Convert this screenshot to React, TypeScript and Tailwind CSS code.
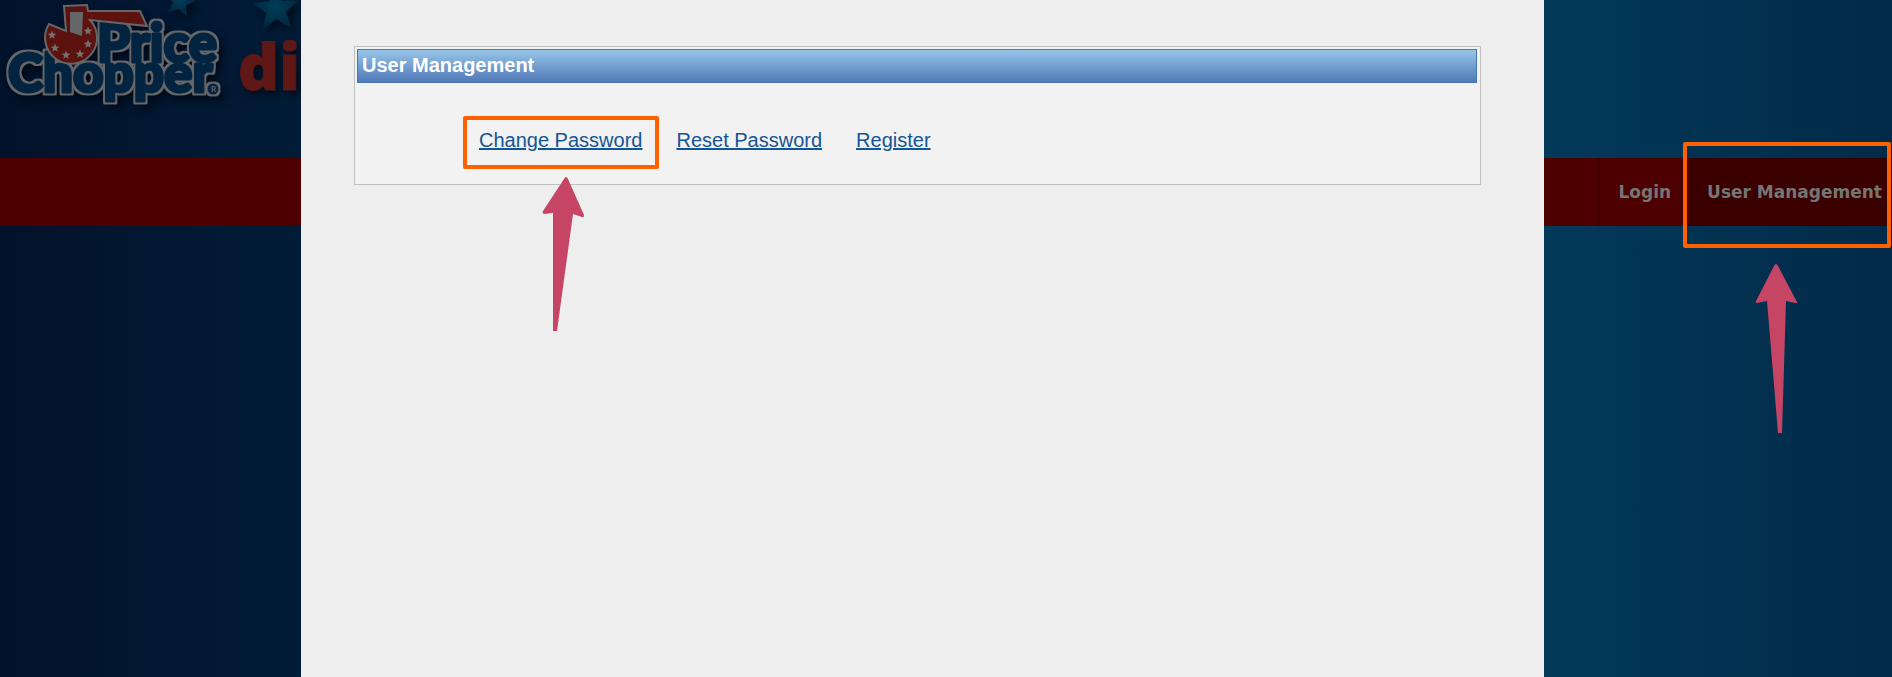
import React from 'react'

const LOGO_STARS: [number, number][] = [
  [52, 35],
  [55, 48],
  [66, 55],
  [80, 54],
  [88, 44],
  [88, 31],
]

const STAR = 'M0 -10 L2.6 -3.4 L9.6 -3 L4.2 1.4 L6 8.2 L0 4.4 L-6 8.2 L-4.2 1.4 L-9.6 -3 L-2.6 -3.4 Z'

const Logo: React.FC = () => {
  return (
    <svg
      className="block"
      width="301"
      height="120"
      viewBox="0 0 301 120"
      role="img"
      aria-label="Price Chopper"
    >
      <defs>
        <radialGradient id="star">
          <stop offset="0" stopColor="#023d58" />
          <stop offset="1" stopColor="#02263f" />
        </radialGradient>
        <filter
          id="shadow"
          x="-10%"
          y="-10%"
          width="130%"
          height="130%"
          colorInterpolationFilters="sRGB"
        >
          <feDropShadow dx="4" dy="5" stdDeviation="4" floodColor="#000814" floodOpacity="0.8" />
        </filter>
        <filter
          id="outline"
          x="-10%"
          y="-10%"
          width="120%"
          height="120%"
          colorInterpolationFilters="sRGB"
        >
          <feMorphology in="SourceAlpha" operator="dilate" radius="1.5" result="grown" />
          <feFlood floodColor="#656669" />
          <feComposite in2="grown" operator="in" result="edge" />
          <feMerge>
            <feMergeNode in="edge" />
            <feMergeNode in="SourceGraphic" />
          </feMerge>
        </filter>
      </defs>
      <g filter="url(#shadow)">
        <path d={STAR} fill="url(#star)" transform="translate(180 2) rotate(12) scale(1.6)" />
        <path d={STAR} fill="url(#star)" transform="translate(276 9) rotate(-3) scale(2.4)" />
      </g>
      <g filter="url(#shadow)">
        <g
          filter="url(#outline)"
          fill="#022440"
          stroke="#022440"
          strokeWidth="3"
          strokeLinejoin="round"
          fontFamily="Lato, sans-serif"
          fontWeight="900"
          fontSize="53"
        >
          <text x="97" y="62">Price</text>
          <text x="8" y="92">Chopper</text>
          <circle cx="213" cy="89" r="4" />
        </g>
        <text x="211" y="92" fontFamily="Lato, sans-serif" fontSize="8" fontWeight="700" fill="#656669">
          R
        </text>
        <path
          d="M64 6 L87 5 L88 11 L140 11 L147 26 L90 20 A26 26 0 1 1 49 24 L66 31 Z"
          fill="#5c1310"
          stroke="#656669"
          strokeWidth="2"
        />
        <path d="M70 12 L83 12 L82 36 L70 32 Z" fill="#656669" />
        {LOGO_STARS.map(([x, y], index) => (
          <path key={index} d={STAR} fill="#77706f" transform={`translate(${x} ${y}) scale(0.45)`} />
        ))}
        <text
          x="238"
          y="90"
          fontFamily="'Open Sans', sans-serif"
          fontWeight="800"
          fontSize="64"
          fill="#5f1815"
          stroke="#5f1815"
          strokeWidth="1"
        >
          di
        </text>
      </g>
    </svg>
  )
}

const App: React.FC = () => {
  return (
    <div className="relative min-h-screen overflow-hidden bg-linear-to-r from-[#02122b] via-[#024466] via-70% to-[#022a48]">
      <header className="h-[158px]">
        <Logo />
      </header>

      <nav className="flex h-[68px] justify-end bg-[#4d0000] font-['DejaVu_Sans',sans-serif] text-[17px] font-bold text-[#757575]">
        <a href="#login" className="flex items-center border-l-2 border-[#400000] px-[18px] pt-0.5">
          Login
        </a>
        <div className="relative">
          <a href="#users" className="flex h-full items-center bg-[#3a0000] pt-0.5 pr-2.5 pl-[18px]">
            User Management
          </a>
          <div className="absolute -top-4 right-px h-[106px] w-[208px] rounded-xs border-4 border-[#ff6000]" />
          <svg
            className="absolute top-[104px] right-[94px]"
            width="44"
            height="174"
            viewBox="0 0 44 174"
            fill="#c74564"
          >
            <path d="M22 2 Q23 2 24 4 L43 40 Q43 42 41 41 L32 39 L28 171 H24 L13 39 L3 41 Q1 41 2 39 L20 4 Q21 2 22 2 Z" />
          </svg>
        </div>
      </nav>

      <div className="absolute inset-0 pr-[348px] pl-[301px]">
        <main className="h-full bg-[#eeeeee] pt-[46px] pr-[63px] pl-[53px] font-['Liberation_Sans',sans-serif] text-xl leading-6">
          <section className="border border-[#c0c0c0] bg-[#f2f2f2] py-0.5 pr-[3px] pl-0.5">
            <h1 className="border border-[#4a75b8] bg-linear-to-b from-[#98c6e8] to-[#5179b8] px-1 pt-[3px] pb-[5px] font-bold text-white">
              User Management
            </h1>
            <div className="flex gap-[34px] pt-[45px] pb-[30px] pl-[122px] text-[#145594]">
              <div className="relative">
                <a href="#change" className="underline">
                  Change Password
                </a>
                <div className="absolute -top-3 -left-4 h-[53px] w-[196px] rounded-xs border-4 border-[#ff6000]" />
                <svg
                  className="absolute top-12 left-[63px]"
                  width="44"
                  height="158"
                  viewBox="0 0 44 158"
                  fill="#c74564"
                >
                  <path d="M24 1 Q25 1 26 3 L42 39 Q42 42 40 41 L31 38 L15 155 H11 V37 L2 38 Q0 37 1 35 L22 3 Q23 1 24 1 Z" />
                </svg>
              </div>
              <a href="#reset" className="underline">
                Reset Password
              </a>
              <a href="#register" className="underline">
                Register
              </a>
            </div>
          </section>
        </main>
      </div>
    </div>
  )
}
export default App
